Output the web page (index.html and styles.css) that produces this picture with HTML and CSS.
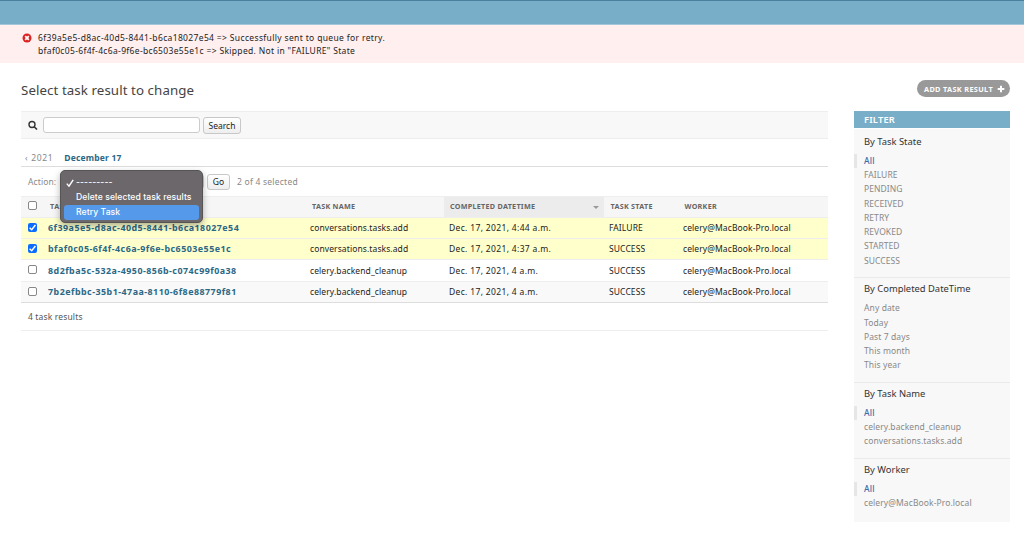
FILE: index.html
```html
<!DOCTYPE html>
<html lang="en">
<head>
    <meta charset="UTF-8">
    <meta name="viewport" content="width=device-width, initial-scale=1.0">
    <title>Select task result to change</title>
    <link rel="stylesheet" href="styles.css">
</head>
<body>
    <div class="breadcrumbs"></div>
    <div class="messages">
        <svg class="error-icon" viewBox="0 0 10 10" width="10" height="10">
            <circle cx="5" cy="5" r="4.5" fill="#dd2222"/>
            <path d="M3.2 3.2L6.8 6.8M6.8 3.2L3.2 6.8" stroke="#fff" stroke-width="1.7"/>
        </svg>
        <div>
            <p>6f39a5e5-d8ac-40d5-8441-b6ca18027e54 =&gt; Successfully sent to queue for retry.</p>
            <p class="skipped">bfaf0c05-6f4f-4c6a-9f6e-bc6503e55e1c =&gt; Skipped. Not in "FAILURE" State</p>
        </div>
    </div>
    <div class="content">
        <div class="heading">
            <h1>Select task result to change</h1>
            <a class="addlink">
                <span>ADD TASK RESULT</span>
                <svg viewBox="0 0 8 8" width="8" height="8"><path d="M4 0.7V7.3M0.7 4H7.3" stroke="#fff" stroke-width="2"/></svg>
            </a>
        </div>
        <div class="changelist">
            <div class="results-area">
                <div class="toolbar">
                    <svg class="search-icon" viewBox="0 0 10 10" width="10" height="10">
                        <circle cx="4" cy="4.5" r="3" fill="none" stroke="#333" stroke-width="1.4"/>
                        <path d="M6.2 6.7L9 9.5" stroke="#333" stroke-width="1.6"/>
                    </svg>
                    <input type="text" class="searchbar">
                    <button class="btn search-btn">Search</button>
                </div>
                <div class="date-nav">
                    <a class="back">‹ 2021</a>
                    <a class="day">December 17</a>
                </div>
                <div class="actions">
                    <span class="label">Action:</span>
                    <div class="select">
                        <ul class="menu">
                            <li><svg viewBox="0 0 8 8" width="8" height="8"><path d="M0.8 4.6L3 7.2L7.2 0.8" fill="none" stroke="#fff" stroke-width="1.4"/></svg><span class="dashes">---------</span></li>
                            <li><span>Delete selected task results</span></li>
                            <li class="active"><span>Retry Task</span></li>
                        </ul>
                    </div>
                    <button class="btn go-btn">Go</button>
                    <span class="counter">2 of 4 selected</span>
                </div>
                <table>
                    <thead>
                        <tr>
                            <th class="c-check"><i class="check"></i></th>
                            <th class="c-id">TASK ID</th>
                            <th class="c-name">TASK NAME</th>
                            <th class="c-date sorted"><div><span>COMPLETED DATETIME</span><i class="arrow"></i></div></th>
                            <th class="c-state">TASK STATE</th>
                            <th class="c-worker">WORKER</th>
                        </tr>
                    </thead>
                    <tbody>
                        <tr class="selected">
                            <td><i class="check on"><svg viewBox="0 0 8 8"><path d="M1.4 4.2L3.3 6L6.6 1.8" fill="none" stroke="#fff" stroke-width="1.3"/></svg></i></td>
                            <td class="id">6f39a5e5-d8ac-40d5-8441-b6ca18027e54</td>
                            <td class="name">conversations.tasks.add</td>
                            <td class="date">Dec. 17, 2021, 4:44 a.m.</td>
                            <td class="state">FAILURE</td>
                            <td class="worker">celery@MacBook-Pro.local</td>
                        </tr>
                        <tr class="selected">
                            <td><i class="check on"><svg viewBox="0 0 8 8"><path d="M1.4 4.2L3.3 6L6.6 1.8" fill="none" stroke="#fff" stroke-width="1.3"/></svg></i></td>
                            <td class="id">bfaf0c05-6f4f-4c6a-9f6e-bc6503e55e1c</td>
                            <td class="name">conversations.tasks.add</td>
                            <td class="date">Dec. 17, 2021, 4:37 a.m.</td>
                            <td class="state">SUCCESS</td>
                            <td class="worker">celery@MacBook-Pro.local</td>
                        </tr>
                        <tr class="tall">
                            <td><i class="check"></i></td>
                            <td class="id">8d2fba5c-532a-4950-856b-c074c99f0a38</td>
                            <td class="name">celery.backend_cleanup</td>
                            <td class="date">Dec. 17, 2021, 4 a.m.</td>
                            <td class="state">SUCCESS</td>
                            <td class="worker">celery@MacBook-Pro.local</td>
                        </tr>
                        <tr class="alt">
                            <td><i class="check"></i></td>
                            <td class="id">7b2efbbc-35b1-47aa-8110-6f8e88779f81</td>
                            <td class="name">celery.backend_cleanup</td>
                            <td class="date">Dec. 17, 2021, 4 a.m.</td>
                            <td class="state">SUCCESS</td>
                            <td class="worker">celery@MacBook-Pro.local</td>
                        </tr>
                    </tbody>
                </table>
                <p class="paginator">4 task results</p>
            </div>
            <div class="filter">
                <h2>FILTER</h2>
                <h3 class="first">By Task State</h3>
                <ul>
                    <li class="current">All</li>
                    <li class="caps">FAILURE</li>
                    <li class="caps">PENDING</li>
                    <li class="caps">RECEIVED</li>
                    <li class="caps">RETRY</li>
                    <li class="caps">REVOKED</li>
                    <li class="caps">STARTED</li>
                    <li class="caps">SUCCESS</li>
                </ul>
                <h3>By Completed DateTime</h3>
                <ul>
                    <li>Any date</li>
                    <li>Today</li>
                    <li>Past 7 days</li>
                    <li>This month</li>
                    <li>This year</li>
                </ul>
                <h3>By Task Name</h3>
                <ul>
                    <li class="current">All</li>
                    <li>celery.backend_cleanup</li>
                    <li>conversations.tasks.add</li>
                </ul>
                <h3>By Worker</h3>
                <ul>
                    <li class="current">All</li>
                    <li>celery@MacBook-Pro.local</li>
                </ul>
            </div>
        </div>
    </div>
</body>
</html>
```
FILE: styles.css
```css
* {
    box-sizing: border-box;
}
body {
    margin: 0;
    background: #fff;
    color: #222;
    font-family: "Lucida Grande", "Noto Sans", sans-serif;
    font-size: 8.5px;
}
h1, h2, h3, p, ul {
    margin: 0;
    padding: 0;
    font-weight: normal;
    list-style: none;
}
.breadcrumbs {
    height: 25px;
    background: #79aec8;
    border-top: 1px solid #4c7f9e;
    border-bottom: 1px solid #a5c6d8;
}
.messages {
    display: flex;
    gap: 6px;
    height: 38px;
    padding: 6px 0 0 22px;
    background: #ffefef;
    line-height: 13px;
    letter-spacing: 0.35px;
}
.messages .skipped {
    letter-spacing: 0.33px;
}
.error-icon {
    margin-top: 2px;
}
.content {
    padding: 17px 14px 0 21px;
}
.heading {
    display: flex;
    justify-content: space-between;
    height: 31px;
}
h1 {
    font-size: 13.3px;
    line-height: 21px;
    letter-spacing: 0.08px;
    color: #444;
}
.addlink {
    display: flex;
    align-items: center;
    justify-content: space-between;
    width: 93px;
    height: 17px;
    padding: 0 5px 0 7px;
    border-radius: 9px;
    background: #999;
    color: #fff;
    font-size: 7.3px;
    font-weight: bold;
    letter-spacing: 0.35px;
}
.changelist {
    display: flex;
    gap: 26px;
    align-items: flex-start;
}
.results-area {
    width: 807px;
}
.toolbar {
    display: flex;
    align-items: center;
    height: 28px;
    padding-left: 7px;
    background: #f8f8f8;
    border-top: 1px solid #eee;
    border-bottom: 1px solid #eee;
}
.searchbar {
    width: 157px;
    height: 16px;
    margin: 0 3px 0 5px;
    border: 1px solid #ccc;
    border-radius: 3px;
    background: #fff;
}
.btn {
    height: 17px;
    padding: 0;
    border: 1px solid #c8c8c8;
    border-radius: 3px;
    background: linear-gradient(#fff, #eee);
    color: #222;
    font-family: inherit;
    font-size: 8.5px;
    line-height: 15px;
}
.search-btn {
    width: 38px;
}
.date-nav {
    display: flex;
    gap: 11px;
    height: 28px;
    padding: 12px 0 0 4px;
    border-bottom: 1px solid #ddd;
    line-height: 14px;
    color: #888;
}
.date-nav .back {
    letter-spacing: 0.65px;
}
.date-nav .day {
    color: #2b6886;
    font-weight: bold;
    letter-spacing: 0.2px;
}
.actions {
    display: flex;
    align-items: center;
    height: 29px;
    padding-left: 7px;
    color: #888;
}
.label {
    width: 32px;
    letter-spacing: 0.1px;
}
.select {
    position: relative;
    width: 144px;
    height: 15px;
    margin-right: 3px;
    border: 1px solid #ccc;
    border-radius: 3px;
}
.menu {
    position: absolute;
    z-index: 2;
    top: -5px;
    left: -1px;
    width: 143px;
    height: 53px;
    padding: 4px 3px;
    border: 1px solid #555;
    border-radius: 5px;
    background: #6c676b;
    box-shadow: 0 3px 7px rgba(0, 0, 0, 0.3);
    color: #fff;
    font-family: Inter, sans-serif;
    font-size: 8.6px;
    font-weight: 500;
    letter-spacing: 0.08px;
}
.menu li {
    display: flex;
    align-items: center;
    height: 15px;
    padding-left: 12px;
    line-height: 15px;
    white-space: nowrap;
}
.menu li svg {
    margin: 0 2px 0 -10px;
}
.menu .active {
    border-radius: 3px;
    background: #5599ea;
}
.go-btn {
    width: 23px;
    height: 16px;
    line-height: 14px;
    margin-right: 7px;
}
.counter {
    letter-spacing: 0.23px;
}
table {
    width: 807px;
    table-layout: fixed;
    border-collapse: separate;
    border-spacing: 0;
}
th, td {
    padding: 0;
    text-align: left;
    white-space: nowrap;
}
th {
    height: 21px;
    padding-left: 1px;
    padding-bottom: 2px;
    background: #f6f6f6;
    border-top: 1px solid #eee;
    color: #666;
    font-size: 7.2px;
    font-weight: bold;
    letter-spacing: 0.28px;
}
td {
    height: 21px;
    border-top: 1px solid #eee;
    line-height: 18px;
    letter-spacing: 0.1px;
}
.tall td {
    height: 22px;
}
th:first-child, td:first-child {
    padding-left: 6.5px;
}
.c-check { width: 27px; }
.c-id { width: 262px; }
.c-name { width: 134px; }
.c-date { width: 160px; }
.c-state { width: 74px; }
th.c-id, th.c-name {
    padding-left: 2px;
}
th.c-id {
    letter-spacing: 0.5px;
}
.sorted {
    padding-left: 6px;
    background: #ececec;
}
.sorted div {
    display: flex;
    align-items: center;
    justify-content: space-between;
    padding-right: 5px;
}
.arrow {
    margin-top: 3px;
    border: 3px solid transparent;
    border-top-color: #999;
    border-bottom: 0;
}
td.date {
    padding-left: 5px;
    letter-spacing: 0.34px;
}
.c-state, .c-worker {
    padding-left: 6.5px;
}
td.state, td.worker {
    padding-left: 5px;
}
.selected td {
    background: #ffffcc;
}
.alt td {
    background: #f9f9f9;
}
td.id {
    color: #2b6886;
    font-size: 8.9px;
    font-weight: bold;
    letter-spacing: 0.48px;
}
.check {
    display: block;
    width: 9px;
    height: 9px;
    margin-bottom: 2px;
    border: 1px solid #888;
    border-radius: 2px;
    background: #fff;
}
.check.on {
    border: 0;
    background: #0b6cff;
}
.check svg {
    display: block;
}
.paginator {
    height: 29px;
    border-top: 1px solid #ddd;
    border-bottom: 1px solid #eee;
    padding-left: 7px;
    line-height: 28px;
    letter-spacing: 0.15px;
    color: #555;
}
.filter {
    width: 156px;
    height: 411px;
    background: #f8f8f8;
}
.filter h2 {
    height: 18px;
    padding-left: 10px;
    border-bottom: 1px solid #fff;
    background: #79aec8;
    color: #fff;
    font-size: 9.3px;
    font-weight: 600;
    line-height: 18px;
    letter-spacing: 0.2px;
}
.filter h3 {
    padding: 4.3px 0 6.1px 10px;
    font-size: 9.4px;
    line-height: 13px;
    color: #333;
}
.filter .first {
    padding: 5.8px 0 6.1px 10px;
}
.filter ul {
    padding-bottom: 9px;
    border-bottom: 1px solid #eaeaea;
}
.filter ul:last-child {
    border-bottom: 0;
}
.filter li {
    height: 14.25px;
    padding-left: 10px;
    line-height: 14.25px;
    letter-spacing: 0.1px;
    color: #888;
}
.filter .caps {
    letter-spacing: 0.05px;
}
.filter .current {
    padding-left: 7px;
    border-left: 3px solid #e6e6e6;
    color: #3b6dab;
    font-weight: 500;
    letter-spacing: 0.2px;
}
```
